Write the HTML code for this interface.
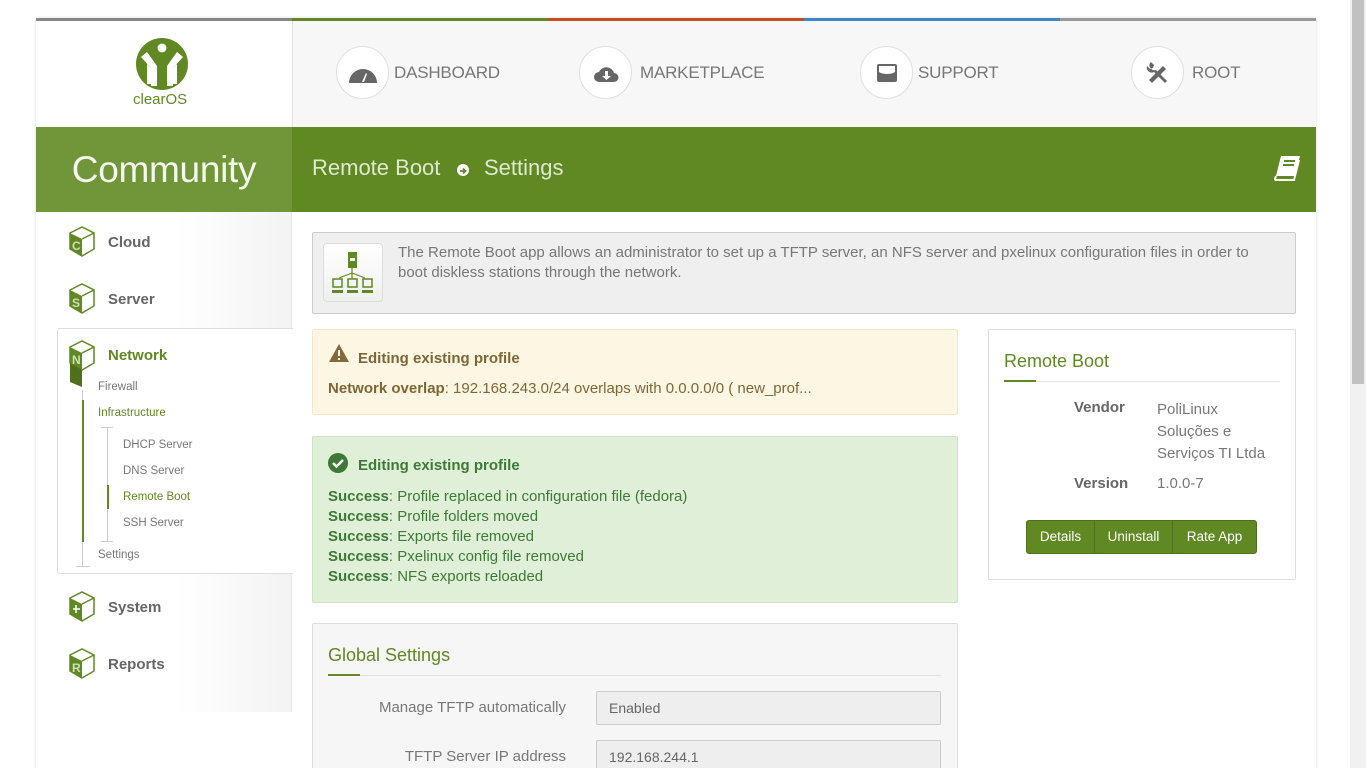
<!DOCTYPE html>
<html><head><meta charset="utf-8"><style>
*{box-sizing:border-box;margin:0;padding:0}
html,body{width:1366px;height:768px;overflow:hidden}
body{background:#fff;font-family:"Liberation Sans",sans-serif;color:#666;position:relative}
.abs{position:absolute}
.wrap{position:absolute;left:36px;top:18px;width:1280px;height:760px;background:#fff;box-shadow:0 0 3px rgba(0,0,0,.15)}
.topbar{position:absolute;top:18px;height:3px}
.hdr{position:absolute;left:292px;top:21px;width:1024px;height:106px;background:#f7f7f7;border-left:1px solid #e2e2e2}
.nav{position:absolute;display:flex;align-items:center;font-size:17px;color:#777;letter-spacing:-0.2px}
.circ{width:53px;height:53px;border-radius:50%;background:#fff;border:1px solid #e0e0e0;display:flex;align-items:center;justify-content:center;margin-right:5px}
.logo{position:absolute;left:36px;top:21px;width:256px;height:106px;background:#fff}
.comm{position:absolute;left:36px;top:127px;width:256px;height:85px;background:#719639;color:#f4f8ee;font-size:37px;text-align:center;line-height:85px;letter-spacing:-0.3px}
.band{position:absolute;left:292px;top:127px;width:1024px;height:85px;background:#608823}
.side{position:absolute;left:36px;top:212px;width:256px;height:500px;background:linear-gradient(90deg,#fff 55%,#f3f3f3);border-right:1px solid #e6e6e6}
.mi{position:absolute;display:flex;align-items:center;font-size:15px;font-weight:bold;color:#666}
.mi svg{margin-right:10px}
.sub{position:absolute;font-size:11.5px;color:#777}
.box{position:absolute;border:1px solid;border-radius:2px}
.b{font-weight:bold}
</style></head><body>
<div class="wrap"></div>
<div class="topbar" style="left:36px;width:256px;background:#888"></div>
<div class="topbar" style="left:292px;width:256px;background:#608823"></div>
<div class="topbar" style="left:548px;width:256px;background:#c5501d"></div>
<div class="topbar" style="left:804px;width:256px;background:#3f84c5"></div>
<div class="topbar" style="left:1060px;width:256px;background:#999"></div>

<div class="logo">
<svg class="abs" style="left:99px;top:16px" width="54" height="54" viewBox="0 0 54 54"><circle cx="27" cy="27" r="26" fill="#608823"/><circle cx="27" cy="11" r="4.5" fill="#fff"/><path d="M6 20l6-5 10 14v20h-6V31zM48 20l-6-5-10 14v20h6V31z" fill="#fff"/><path d="M12 27l4 4v16h-4zM42 27l-4 4v16h4z" fill="#fff"/></svg>
<div class="abs" style="left:97px;top:70px;font-size:15px;color:#608823">clearOS</div>
</div>
<div class="hdr"></div>
<div class="nav" style="left:336px;top:46px"><div class="circ"><svg width="30" height="24" viewBox="0 0 30 24"><path d="M1 22A14 14 0 0 1 29 22z" fill="#666"/><path d="M14 21l4-9 1 1-3 8z" fill="#fff"/></svg></div>DASHBOARD</div>
<div class="nav" style="left:579px;top:46px"><div class="circ"><svg width="26" height="20" viewBox="0 0 26 20"><path d="M6 19a5 5 0 0 1 0-10 8 8 0 0 1 15 1 4.5 4.5 0 0 1 0 9z" fill="#666"/><path d="M12 8h3v5h3l-4.5 4-4.5-4h3z" fill="#fff"/></svg></div><span style="margin-left:3px">MARKETPLACE</span></div>
<div class="nav" style="left:860px;top:46px"><div class="circ"><svg width="24" height="22" viewBox="0 0 24 22"><rect x="2" y="2" width="20" height="18" rx="2" fill="#666"/><path d="M4 4h16v6a10 5 0 0 1-16 0z" fill="#fff"/></svg></div>SUPPORT</div>
<div class="nav" style="left:1131px;top:46px"><div class="circ"><svg width="26" height="26" viewBox="0 0 26 26"><path d="M4 20L18 6l3 3L7 23z" fill="#666"/><path d="M5 3a5 5 0 0 0 6 7l11 11-2 2L9 12A5 5 0 0 1 2 6l3 3 3-1 1-3-3-3z" fill="#666"/></svg></div><span style="margin-left:3px">ROOT</span></div>

<div class="comm">Community</div>
<div class="band"></div>
<div class="abs" style="left:312px;top:155px;font-size:22px;color:#dfe9cf">Remote Boot</div>
<div class="abs" style="left:457px;top:164px;width:12px;height:12px;border-radius:50%;background:#fff"><svg width="12" height="12" viewBox="0 0 12 12"><path d="M3 6h5M6 3.5L8.5 6 6 8.5" stroke="#608823" stroke-width="1.8" fill="none"/></svg></div>
<div class="abs" style="left:484px;top:155px;font-size:22px;color:#dfe9cf">Settings</div>
<svg class="abs" style="left:1272px;top:154px" width="30" height="28" viewBox="0 0 30 28"><path d="M9 2h19l-5 20H4z" fill="#fff"/><path d="M12 7h11M11 11h11" stroke="#608823" stroke-width="2"/><path d="M4 22l-1 3a1 1 0 0 0 1 1h18l5-20" stroke="#fff" stroke-width="2" fill="none"/></svg>

<div class="side"></div>
<div class="box" style="left:57px;top:328px;width:236px;height:246px;border-color:#ddd;background:#fff;border-right:none;border-radius:3px 0 0 3px"></div>
<svg width="0" height="0" style="position:absolute"><defs><g id="cube"><path d="M2 7l12-6 12 6v16l-12 7-12-7z" fill="#fff" stroke="#608823" stroke-width="1.5"/><path d="M2 7l12 6v17l-12-7z" fill="#608823"/><path d="M14 13l12-6" stroke="#608823" stroke-width="1.5"/></g></defs></svg>
<div class="mi" style="left:68px;top:226px"><svg width="30" height="32"><use href="#cube"/><text x="4" y="24" font-size="12" fill="#cde0b0" font-family="Liberation Sans">C</text></svg>Cloud</div>
<div class="mi" style="left:68px;top:283px"><svg width="30" height="32"><use href="#cube"/><text x="4" y="24" font-size="12" fill="#cde0b0" font-family="Liberation Sans">S</text></svg>Server</div>
<div class="mi" style="left:68px;top:340px;color:#608823"><svg width="30" height="48"><use href="#cube"/><path d="M2 23l12 7v17l-12-5z" fill="#4e6f1c"/><text x="4" y="24" font-size="12" fill="#cde0b0" font-family="Liberation Sans">N</text></svg><span style="margin-top:-17px">Network</span></div>
<div class="abs" style="left:82px;top:390px;width:1px;height:177px;background:#ccc"></div>
<div class="abs" style="left:82px;top:400px;width:2px;height:142px;background:#608823"></div>
<div class="abs" style="left:76px;top:566px;width:14px;height:1px;background:#ccc"></div>
<div class="abs" style="left:107px;top:427px;width:1px;height:114px;background:#ccc"></div>
<div class="abs" style="left:101px;top:427px;width:12px;height:1px;background:#ccc"></div>
<div class="abs" style="left:101px;top:541px;width:12px;height:1px;background:#ccc"></div>
<div class="abs" style="left:107px;top:485px;width:2px;height:24px;background:#608823"></div>
<div class="sub" style="left:98px;top:381px">Firewall</div>
<div class="sub" style="left:98px;top:407px;color:#608823">Infrastructure</div>
<div class="sub" style="left:123px;top:439px">DHCP Server</div>
<div class="sub" style="left:123px;top:465px">DNS Server</div>
<div class="sub" style="left:123px;top:491px;color:#608823">Remote Boot</div>
<div class="sub" style="left:123px;top:517px">SSH Server</div>
<div class="sub" style="left:98px;top:549px">Settings</div>
<div class="mi" style="left:68px;top:591px"><svg width="30" height="32"><use href="#cube"/><path d="M5 18h7M8 14v8" stroke="#fff" stroke-width="1.5"/></svg>System</div>
<div class="mi" style="left:68px;top:648px"><svg width="30" height="32"><use href="#cube"/><text x="4" y="24" font-size="12" fill="#cde0b0" font-family="Liberation Sans">R</text></svg>Reports</div>

<div class="box" style="left:312px;top:232px;width:984px;height:82px;background:#efefef;border-color:#ccc"></div>
<div class="box" style="left:323px;top:243px;width:60px;height:59px;background:linear-gradient(#fff,#eef0ee);border-color:#ddd;border-radius:4px"></div>
<svg class="abs" style="left:330px;top:250px" width="46" height="46" viewBox="0 0 46 46"><rect x="18" y="2" width="9" height="16" fill="#608823"/><rect x="20" y="8" width="5" height="3" fill="#fff"/><path d="M22 18v5M22 23l-13 5M22 23v5M22 23l13 5" stroke="#608823" stroke-width="1.2"/><g fill="none" stroke="#608823" stroke-width="1.5"><rect x="3" y="29" width="9" height="8"/><rect x="18" y="29" width="9" height="8"/><rect x="33" y="29" width="9" height="8"/></g><g fill="#608823"><rect x="2" y="40" width="11" height="3"/><rect x="17" y="40" width="11" height="3"/><rect x="32" y="40" width="11" height="3"/></g></svg>
<div class="abs" style="left:398px;top:243px;width:880px;font-size:15px;line-height:20px;color:#777">The Remote Boot app allows an administrator to set up a TFTP server, an NFS server and pxelinux configuration files in order to boot diskless stations through the network.</div>

<div class="box" style="left:312px;top:329px;width:646px;height:86px;background:#fcf6e3;border-color:#f3e7c6"></div>
<svg class="abs" style="left:328px;top:343px" width="22" height="20" viewBox="0 0 22 20"><path d="M11 1l10 18H1z" fill="#846a38"/><path d="M10 7h2v6h-2zM10 15h2v2h-2z" fill="#fff"/></svg>
<div class="abs b" style="left:358px;top:350px;font-size:15px;color:#7e6737">Editing existing profile</div>
<div class="abs" style="left:328px;top:380px;font-size:15px;color:#7e6737"><span class="b">Network overlap</span>: 192.168.243.0/24 overlaps with 0.0.0.0/0 ( new_prof...</div>

<div class="box" style="left:312px;top:436px;width:646px;height:167px;background:#dfefd8;border-color:#cfe3c2"></div>
<svg class="abs" style="left:328px;top:453px" width="20" height="20" viewBox="0 0 20 20"><circle cx="10" cy="10" r="10" fill="#3d7a36"/><path d="M5 10l3.5 3.5L15 7" stroke="#fff" stroke-width="2.5" fill="none"/></svg>
<div class="abs b" style="left:358px;top:457px;font-size:15px;color:#3d7a36">Editing existing profile</div>
<div class="abs" style="left:328px;top:487px;font-size:15px;line-height:20px;color:#3d7a36"><span class="b">Success</span>: Profile replaced in configuration file (fedora)<br><span class="b">Success</span>: Profile folders moved<br><span class="b">Success</span>: Exports file removed<br><span class="b">Success</span>: Pxelinux config file removed<br><span class="b">Success</span>: NFS exports reloaded</div>

<div class="box" style="left:312px;top:623px;width:646px;height:160px;background:#f6f6f6;border-color:#ddd"></div>
<div class="abs" style="left:328px;top:645px;font-size:18px;color:#608823">Global Settings</div>
<div class="abs" style="left:328px;top:675px;width:613px;height:1px;background:#e3e3e3"></div>
<div class="abs" style="left:328px;top:674px;width:32px;height:2px;background:#608823"></div>
<div class="abs" style="left:330px;top:699px;width:236px;text-align:right;font-size:15px;color:#777">Manage TFTP automatically</div>
<div class="box" style="left:596px;top:691px;width:345px;height:34px;background:#eee;border-color:#ccc;font-size:14px;line-height:32px;padding-left:12px;color:#666">Enabled</div>
<div class="abs" style="left:330px;top:748px;width:236px;text-align:right;font-size:15px;color:#777">TFTP Server IP address</div>
<div class="box" style="left:596px;top:740px;width:345px;height:34px;background:#eee;border-color:#ccc;font-size:14px;line-height:32px;padding-left:12px;color:#666">192.168.244.1</div>

<div class="box" style="left:988px;top:329px;width:308px;height:251px;background:#fff;border-color:#ddd"></div>
<div class="abs" style="left:1004px;top:351px;font-size:18px;color:#608823">Remote Boot</div>
<div class="abs" style="left:1004px;top:381px;width:276px;height:1px;background:#e3e3e3"></div>
<div class="abs" style="left:1004px;top:380px;width:32px;height:2px;background:#608823"></div>
<div class="abs b" style="left:1074px;top:399px;font-size:15px;color:#666">Vendor</div>
<div class="abs" style="left:1157px;top:399px;font-size:15px;line-height:22px;color:#777">PoliLinux<br>Soluções e<br>Serviços TI Ltda</div>
<div class="abs b" style="left:1074px;top:475px;font-size:15px;color:#666">Version</div>
<div class="abs" style="left:1157px;top:475px;font-size:15px;color:#777">1.0.0-7</div>
<div class="abs" style="left:1026px;top:520px;width:231px;height:34px;background:#608823;border:1px solid #4e6f1c;border-radius:3px;display:flex;color:#fff;font-size:13.5px;line-height:32px">
<div style="width:68px;text-align:center;border-right:1px solid #4e6f1c">Details</div>
<div style="width:78px;text-align:center;border-right:1px solid #4e6f1c">Uninstall</div>
<div style="flex:1;text-align:center">Rate App</div></div>

<div class="abs" style="left:1350px;top:0;width:16px;height:768px;background:#f1f1f1"></div>
<div class="abs" style="left:1352px;top:0;width:12px;height:384px;background:#c1c1c1"></div>
</body></html>
